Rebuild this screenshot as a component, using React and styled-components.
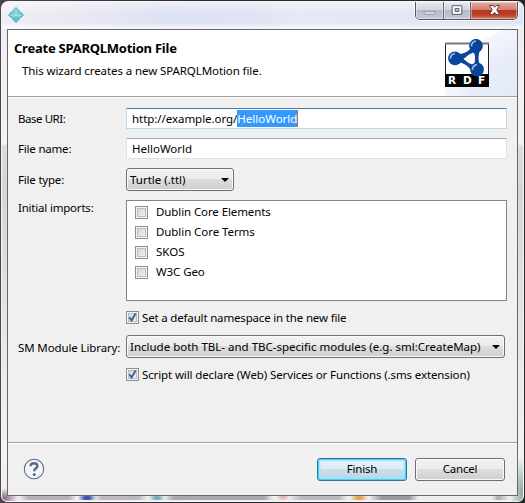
import React from 'react';
import styled, { createGlobalStyle, css } from 'styled-components';

const Global = createGlobalStyle`
  * { box-sizing: border-box; }
  body { margin: 0; background: #29282c; overflow: hidden; }
`;

const Desktop = styled.main`
  width: 525px;
  height: 503px;
  padding: 1px;
  background: linear-gradient(90deg, #4b444b 0, #2b292e 40%, #28282b 100%);
  font: 11.5px/16px 'Noto Sans', 'Open Sans', sans-serif;
  color: #000;
`;

const Window = styled.section`
  width: 523px;
  height: 501px;
  display: flex;
  flex-direction: column;
  border-radius: 7px 7px 6px 6px;
  border: 1px solid #f5f4f7;
  background:
    radial-gradient(ellipse 14px 10px at 2px 496px, #89658a, transparent),
    radial-gradient(ellipse 12px 35px at 520px 490px, #8fa9a1, transparent),
    linear-gradient(90deg, #f0eef4 0, #e6e7f2 18%, #dde2f2 31%, #dfe3f3 48%, #e6e8f4 57%, #dfe4f3 100%) 0 0 / 100% 28px no-repeat,
    linear-gradient(#efedf1 0, #f3f1f4 142px, #dfdce0 144px, #d8d5d8 190px, #f4f2f4 450px, #eee 100%);
  overflow: hidden;
`;

const TitleBar = styled.header`
  height: 27px;
  flex: none;
  display: flex;
  justify-content: space-between;
  align-items: flex-start;
  padding: 0 5px 0 6px;
  background: linear-gradient(rgba(255,255,255,.45), rgba(255,255,255,0) 45%, rgba(255,255,255,0) 75%, rgba(255,255,255,.75));
`;

const AppIcon = styled.svg`
  width: 16px;
  height: 16px;
  margin-top: 5px;
`;

const WindowControls = styled.div`
  display: flex;
  height: 18px;
  border: 1px solid #56555f;
  border-top: 0;
  border-radius: 0 0 5px 5px;
  box-shadow: 0 0 0 1px rgba(255,255,255,.7);
  overflow: hidden;
`;

const ControlButton = styled.button`
  width: ${p => p.$width}px;
  height: 17px;
  padding: 0;
  border: 0;
  border-right: ${p => (p.$close ? 0 : '1px solid #686875')};
  background: ${p => p.$close
    ? 'linear-gradient(#e5aca1 0, #d47e6e 45%, #b83420 50%, #c03e26 75%, #d87860 100%)'
    : 'linear-gradient(#e6e7ee 0, #d3d6df 45%, #b6bac7 50%, #c6cad7 100%)'};
  box-shadow: inset 0 0 0 1px rgba(255,255,255,.4);
  svg { display: block; width: 100%; height: 17px; }
`;

const Client = styled.div`
  width: 511px;
  height: 467px;
  margin-left: 5px;
  flex: none;
  display: flex;
  flex-direction: column;
  border: 1px solid #69676b;
  background: #f0f0f0;
`;

const Banner = styled.div`
  height: 67px;
  flex: none;
  display: flex;
  justify-content: space-between;
  padding: 9px 27px 0 6px;
  border-bottom: 1px solid #a0a0a0;
  background:
    radial-gradient(circle at 530px 90px, #dfe6f7 0, #e8edf9 70px, #f4f6fc 96px, transparent 97px),
    #fff;
`;

const Title = styled.h1`
  margin: 0;
  font-size: 13px;
  line-height: 18px;
  font-weight: 700;
  letter-spacing: ${p => p.$tracking}px;
  white-space: nowrap;
`;

const Text = styled.span`
  letter-spacing: ${p => p.$tracking || 0}px;
  white-space: pre;
`;

const Description = styled(Text)`
  display: block;
  padding: 6px 0 0 8px;
`;

const RdfLogo = styled.svg`
  width: 46px;
  height: 50px;
  flex: none;
`;

const Form = styled.div`
  height: 346px;
  flex: none;
  padding: 10px 10px 0 10px;
  border-top: 1px solid #fff;
  border-bottom: 1px solid #a0a0a0;
  display: grid;
  grid-template-columns: 108px 381px;
  grid-template-rows: 22px 22px 24px 103px 16px 25px 14px;
  row-gap: 8px;
`;

const Label = styled(Text)`
  grid-column: 1;
  align-self: ${p => (p.$top ? 'start' : 'center')};
`;

const Field = styled.div`
  grid-column: 2;
  height: 21px;
  padding: 0 5px;
  display: flex;
  align-items: center;
  border: 1px solid ${p => (p.$focused ? '#b9d9ed' : '#dfe1e7')};
  border-top-color: ${p => (p.$focused ? '#477aa7' : '#a5a7b0')};
  border-radius: 1px;
  background: #fff;
`;

const Selection = styled(Text)`
  background: #3399ff;
  color: #fff;
  border-right: 1px solid #c06a38;
  line-height: 17px;
`;

const Combo = styled.div`
  grid-column: 2;
  width: ${p => p.$width}px;
  height: 23px;
  padding: 0 4px 0 3px;
  display: flex;
  align-items: center;
  justify-content: space-between;
  border: 1px solid #707070;
  border-radius: 3px;
  box-shadow: inset 0 0 0 1px #f9f9f9;
  background: linear-gradient(#f2f2f2 0, #ebebeb 49%, #dddddd 50%, #cfcfcf 100%);
`;

const Arrow = styled.span`
  border: 4px solid transparent;
  border-top-color: #000;
  border-bottom: 0;
`;

const ImportList = styled.div`
  grid-column: 2;
  height: 101px;
  padding: 1px 0 0 8px;
  border: 1px solid #828287;
  background: #fff;
`;

const Option = styled.div`
  height: ${p => (p.$listed ? 20 : 13)}px;
  display: flex;
  grid-column: 2;
  align-items: center;
  gap: ${p => (p.$listed ? 8 : 3)}px;
`;

const Box = styled.span`
  width: 13px;
  height: 13px;
  flex: none;
  border: 1px solid #8e8f8f;
  box-shadow: inset 0 0 0 1px #f4f4f4, inset 0 0 0 2px #b9bec5;
  background: linear-gradient(135deg, #cbcfd5, #f6f6f6);
  svg { display: block; width: 11px; height: 11px; }
`;

const Footer = styled.footer`
  flex: 1;
  padding: 14px 12px 0 15px;
  border-top: 1px solid #fff;
  display: flex;
  gap: 8px;
`;

const HelpIcon = styled.svg`
  width: 22px;
  height: 22px;
  margin-right: auto;
`;

const primary = css`
  border-color: #2f7797;
  box-shadow: inset 0 0 0 1px #48d2f8, inset 0 0 2px 2px #9be3f8;
  background: linear-gradient(#eaf4f9 0, #dcebf3 49%, #c9dfeb 50%, #bad5e3 100%);
`;

const Button = styled.button`
  width: 90px;
  height: 23px;
  padding: 0 0 1px;
  border: 1px solid #707070;
  border-radius: 3px;
  box-shadow: inset 0 0 0 1px #fafafa;
  background: linear-gradient(#f2f2f2 0, #ebebeb 49%, #dddddd 50%, #cfcfcf 100%);
  font: inherit;
  color: #000;
  ${p => p.$primary && primary}
`;

const Reflections = styled.div`
  height: 4px;
  margin: 0 7px;
  background:
    radial-gradient(ellipse 9px 5px at 78px 2px, #3d55ae 30%, transparent),
    radial-gradient(ellipse 8px 5px at 148px 2px, #68acb5 20%, transparent),
    radial-gradient(ellipse 7px 4px at 274px 1px, #dfa5a6, transparent),
    radial-gradient(ellipse 9px 5px at 350px 2px, #e59d47 20%, transparent),
    linear-gradient(90deg, transparent 10px, #b5b4b5 20px, #b5b4b5 60px, transparent 67px, transparent 84px, #bbb 93px, #bbb 130px, transparent 138px, transparent 155px, #aaa 165px, #aaa 255px, transparent 264px, transparent 280px, #bbb 292px, #bbb 330px, transparent 338px, transparent 360px, #999 373px, #999 400px, transparent 409px, transparent 483px, #aaa 489px, transparent 500px);
`;

const Check = () => (
  <svg viewBox="0 0 11 11">
    <path d="M2.3 5.2 4.6 8.4 8.6 1.6" fill="none" stroke="#435b9b" strokeWidth="1.9" />
  </svg>
);

const imports = [
  ['Dublin Core Elements', -0.1],
  ['Dublin Core Terms', -0.07],
  ['SKOS', 0],
  ['W3C Geo', -0.1],
];

const nodes = [[32, 6.8], [11, 19.3], [33, 30.5]];

export default function App() {
  return (
    <>
      <Global />
      <Desktop>
        <Window>
          <TitleBar>
            <AppIcon viewBox="0 0 16 16">
              <path d="M8 0 16 8 8 16 0 8Z" fill="#4fb2cc" />
              <path d="M8 1 11 4 8 7 5 4ZM2 8 5 5 7 8 5 11ZM9 8 12 5 14 8 12 11Z" fill="#79cddd" />
              <path d="M4 4 12 12M12 4 4 12M8 2V14M2 8H14" stroke="#c2edf2" strokeWidth=".7" />
            </AppIcon>
            <WindowControls>
              <ControlButton $width={28} aria-label="Minimize">
                <svg viewBox="0 0 28 17"><rect x="8.5" y="9.5" width="11" height="3" fill="#d8dae1" stroke="#9ca0ac" /></svg>
              </ControlButton>
              <ControlButton $width={27} aria-label="Maximize">
                <svg viewBox="0 0 27 17">
                  <path d="M8.5 3.5H18.5V12.5H8.5ZM11.5 6.5V9.5H15.5V6.5Z" fill="#fff" fillRule="evenodd" stroke="#555863" />
                </svg>
              </ControlButton>
              <ControlButton $width={46} $close aria-label="Close">
                <svg viewBox="0 0 46 17">
                  <path d="M18.5 3.5H22L23.5 5.3 25 3.5H28.5L25.7 7.7 28.5 12.5H25L23.5 10.3 22 12.5H18.5L21.3 7.7Z" fill="#fff" stroke="#594447" />
                </svg>
              </ControlButton>
            </WindowControls>
          </TitleBar>
          <Client>
            <Banner>
              <div>
                <Title $tracking={-0.24}>Create SPARQLMotion File</Title>
                <Description $tracking={-0.09}>This wizard creates a new SPARQLMotion file.</Description>
              </div>
              <RdfLogo viewBox="0 0 46 50">
                <rect x="1.5" y="4.5" width="43" height="43" fill="#fff" stroke="#222" />
                <path d="M1 4.5H45" stroke="#77797d" strokeWidth="2" />
                <rect x="1" y="35" width="44" height="13" fill="#050505" />
                <path
                  fillRule="evenodd"
                  fill="#0c479a"
                  d="M27 9Q22 15 14 15V23Q22 24 28 32L36 27Q33 19 36 11ZM29 13.5Q31.5 15 31 20Q31 24 29.5 26Q24 24.5 19.5 20Q23 16 29 13.5Z"
                />
                {nodes.map(([x, y]) => (
                  <g key={y}>
                    <circle cx={x} cy={y} r="6.9" fill="#0b459b" />
                    <path d={`M${x - 4.6} ${y + 0.5}Q${x - 4.5} ${y - 4} ${x} ${y - 4.8}`} fill="none" stroke="#9dbbe2" strokeWidth="1.7" />
                  </g>
                ))}
                <g fill="#fff" fontFamily="DejaVu Sans" fontSize="10.5" fontWeight="700">
                  <text x="4" y="45.4">R</text><text x="19" y="45.4">D</text><text x="34" y="45.4">F</text>
                </g>
              </RdfLogo>
            </Banner>
            <Form>
              <Label $tracking={-0.45}>Base URI:</Label>
              <Field $focused>
                <Text $tracking={-0.05}>http://example.org/</Text>
                <Selection>HelloWorld</Selection>
              </Field>
              <Label $tracking={-0.2}>File name:</Label>
              <Field><Text>HelloWorld</Text></Field>
              <Label $tracking={-0.2}>File type:</Label>
              <Combo $width={108}><Text>Turtle (.ttl)</Text><Arrow /></Combo>
              <Label $top $tracking={-0.2}>Initial imports:</Label>
              <ImportList>
                {imports.map(([name, tracking]) => (
                  <Option $listed key={name}><Box /><Text $tracking={tracking}>{name}</Text></Option>
                ))}
              </ImportList>
              <Option><Box><Check /></Box><Text $tracking={-0.17}>Set a default namespace in the new file</Text></Option>
              <Label $tracking={-0.12}>SM Module Library:</Label>
              <Combo $width={379}><Text>Include both TBL- and TBC-specific modules (e.g. sml:CreateMap)</Text><Arrow /></Combo>
              <Option><Box><Check /></Box><Text $tracking={-0.12}>Script will declare (Web) Services or Functions (.sms extension)</Text></Option>
            </Form>
            <Footer>
              <HelpIcon viewBox="0 0 22 22">
                <circle cx="11" cy="11" r="9.7" fill="#f4f5f7" stroke="#596b88" strokeWidth="1.1" />
                <path d="M7.5 8.2Q7.6 5.3 11 5.3Q14.4 5.3 14.4 8Q14.4 9.5 12.7 10.6Q11.2 11.5 11.2 13.2" fill="none" stroke="#596b88" strokeWidth="2.4" />
                <circle cx="11.2" cy="16.4" r="1.5" fill="#596b88" />
              </HelpIcon>
              <Button $primary><Text $tracking={-0.2}>Finish</Text></Button>
              <Button><Text $tracking={-0.2}>Cancel</Text></Button>
            </Footer>
          </Client>
          <Reflections />
        </Window>
      </Desktop>
    </>
  );
}
